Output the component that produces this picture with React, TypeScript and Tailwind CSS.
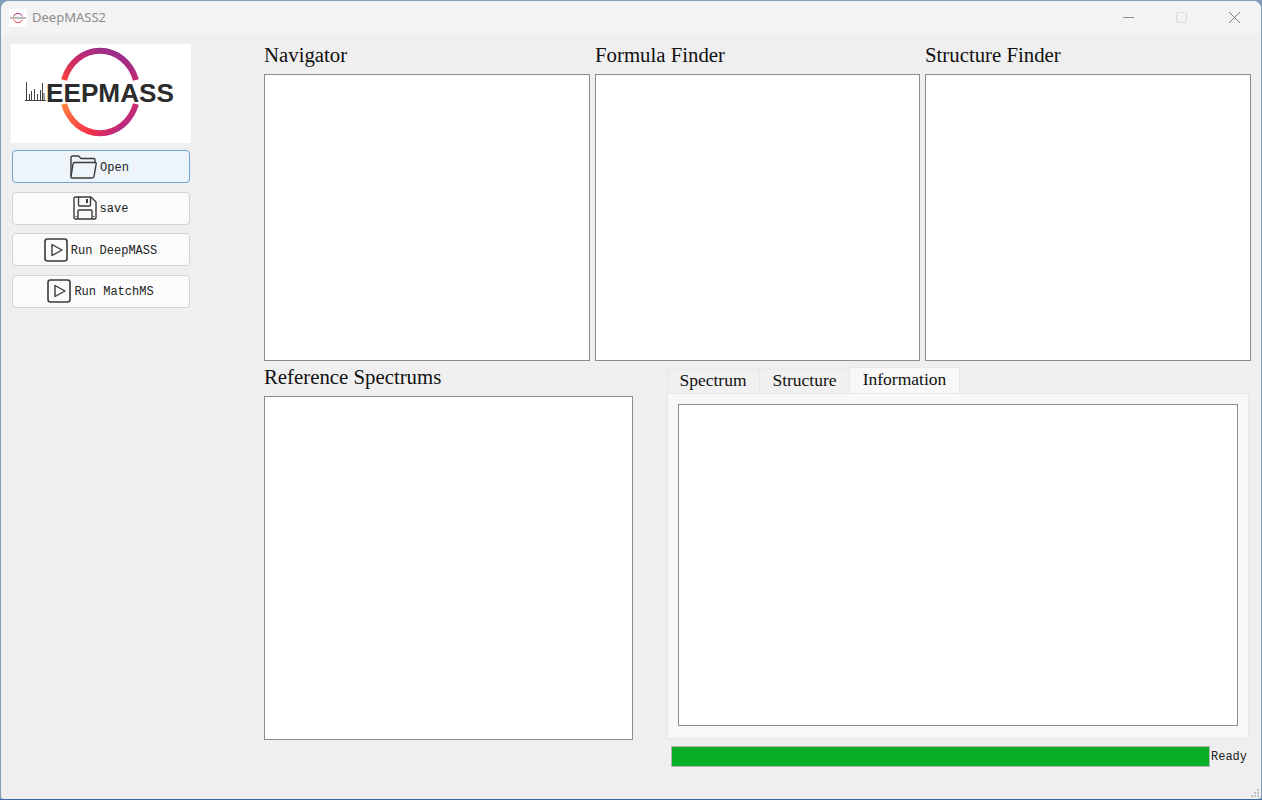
import React from 'react';

const serif = "font-['Liberation_Serif',serif]";

const FolderIcon = () => (
  <svg width="28" height="24" viewBox="0 0 28 24" fill="none" stroke="#3a3a3a" strokeWidth="1.4" strokeLinejoin="round">
    <path d="M2 21V2.500Q2 1 3.500 1H9.500L12 3.500H24.500Q26 3.500 26 5V7.500" />
    <path d="M5.500 7.500H26Q27.500 7.500 27.200 9L25 21.500Q24.800 23 23 23H3Q1.700 23 2 21.500L4 9Q4.200 7.500 5.500 7.500Z" />
  </svg>
);

const SaveIcon = () => (
  <svg width="24" height="24" viewBox="0 0 24 24" fill="none" stroke="#3a3a3a" strokeWidth="1.4" strokeLinejoin="round">
    <path d="M2.500 1H18L23 6V21.500Q23 23 21.500 23H2.500Q1 23 1 21.500V2.500Q1 1 2.500 1Z" />
    <path d="M5.500 1V9Q5.500 10 6.500 10H16.500Q17.500 10 17.500 9V1" />
    <rect x="13" y="3" width="2" height="4" fill="#3a3a3a" stroke="none" />
    <path d="M5 23V15Q5 14 6 14H18Q19 14 19 15V23" />
    <circle cx="3.200" cy="20.500" r="0.700" fill="#3a3a3a" stroke="none" />
    <circle cx="20.800" cy="20.500" r="0.700" fill="#3a3a3a" stroke="none" />
  </svg>
);

const PlayIcon = () => (
  <svg width="24" height="24" viewBox="0 0 24 24" fill="none" stroke="#3a3a3a" strokeLinejoin="round">
    <rect x="1" y="1" width="22" height="22" rx="2.500" strokeWidth="1.600" />
    <path d="M8 6.500L18 12L8 17.500Z" strokeWidth="1.400" />
  </svg>
);

const Logo = () => (
  <svg width="180" height="99" viewBox="0 0 180 99" className="block bg-white">
    <defs>
      <linearGradient id="ringTop" x1="0" y1="1" x2="1" y2="0">
        <stop offset="0" stopColor="#f8403c" />
        <stop offset="0.5" stopColor="#c32a74" />
        <stop offset="1" stopColor="#82309a" />
      </linearGradient>
      <linearGradient id="ringBottom" x1="0" y1="0" x2="1" y2="0.4">
        <stop offset="0" stopColor="#ff8040" />
        <stop offset="0.65" stopColor="#f5304a" />
        <stop offset="1" stopColor="#b42a86" />
      </linearGradient>
    </defs>
    <path d="M53.100 36A37.500 41 0 0 1 124.900 36" fill="none" stroke="url(#ringTop)" strokeWidth="6" />
    <path d="M53.100 60A37.500 41 0 0 0 124.900 60" fill="none" stroke="url(#ringBottom)" strokeWidth="6" />
    <g stroke="#444" strokeWidth="1">
      <path d="M15.500 56V38M18.500 56V50M20.500 56V47M23.500 56V45M26.500 56V50M29.500 56V46M31.500 56V39M33 56V49" />
      <path d="M14 56.500H35" />
    </g>
    <text x="35" y="57.500" fontFamily="Liberation Sans" fontWeight="700" fontSize="26" fill="#2c2c2c" textLength="128" lengthAdjust="spacingAndGlyphs">EEPMASS</text>
  </svg>
);

const TitleLogo = () => (
  <svg width="18" height="18" viewBox="0 0 18 18" className="block bg-white">
    <path d="M4.500 7.500A4.800 4.800 0 0 1 13.500 7.500" fill="none" stroke="#b0307c" strokeWidth="1" />
    <path d="M4.500 10.500A4.800 4.800 0 0 0 13.500 10.500" fill="none" stroke="#f5504a" strokeWidth="1" />
    <path d="M1 9H17" stroke="#777" strokeWidth="1" />
  </svg>
);

const SideButton = ({ icon, label, active }: { icon: React.ReactNode; label: string; active?: boolean }) => (
  <button
    className={`flex h-[33px] w-[178px] items-center justify-center rounded-[4px] border font-['Liberation_Mono',monospace] text-[12px] text-[#222] ${
      active ? 'border-[#6ea4cf] bg-[#edf4fa] pr-[4px]' : 'border-[#d3d3d3] bg-[#fbfbfb] pr-[1px]'
    }`}
  >
    {icon}
    <span className="ml-[3px] pt-[2px]">{label}</span>
  </button>
);

const Panel = ({ title, className }: { title: string; className: string }) => (
  <div className={`flex flex-col ${className}`}>
    <div className={`flex h-[30px] items-center pb-[8px] text-[20.800px] leading-none text-[#111] ${serif}`}>{title}</div>
    <div className="flex-1 border border-[#8a8c93] bg-white" />
  </div>
);

export default function App() {
  return (
    <div className="flex h-[800px] w-[1262px] flex-col overflow-hidden bg-[#7f9db8]">
      <div className="relative ml-[1px] mt-[1px] flex h-[798px] w-[1260px] flex-col rounded-t-[8px] rounded-b-[3px] bg-[#efefef]">
        {/* title bar */}
        <div className="flex h-[33px] shrink-0 items-center rounded-t-[8px] bg-[#f3f3f3] pl-[8px]">
          <TitleLogo />
          <span className="ml-[5px] font-['Noto_Sans',sans-serif] text-[13px] text-[#8c8c8c]">DeepMASS2</span>
          <div className="ml-auto flex items-center">
            <div className="flex w-[44px] justify-center">
              <div className="h-px w-[11px] bg-[#8f8f8f]" />
            </div>
            <div className="flex w-[62px] justify-center">
              <div className="h-[11px] w-[11px] rounded-[2px] border border-[#dcdcdc]" />
            </div>
            <div className="flex w-[44px] justify-center">
              <svg width="13" height="13" viewBox="0 0 13 13" stroke="#7d7d7d" strokeWidth="1">
                <path d="M1 1L12 12M12 1L1 12" />
              </svg>
            </div>
            <div className="w-[5px]" />
          </div>
        </div>

        <div className="flex flex-1 pl-[10px] pr-[10px] pt-[10px]">
          {/* sidebar */}
          <div className="flex w-[180px] shrink-0 flex-col items-start">
            <Logo />
            <div className="ml-px mt-[7px] flex flex-col gap-[8.500px]">
              <SideButton icon={<FolderIcon />} label="Open" active />
              <SideButton icon={<SaveIcon />} label="save" />
              <SideButton icon={<PlayIcon />} label="Run DeepMASS" />
              <SideButton icon={<PlayIcon />} label="Run MatchMS" />
            </div>
          </div>

          {/* main */}
          <div className="ml-[73px] flex flex-1 flex-col">
            <div className="flex h-[317px] gap-[5px]">
              <Panel title="Navigator" className="w-[326px]" />
              <Panel title="Formula Finder" className="w-[325px]" />
              <Panel title="Structure Finder" className="w-[326px]" />
            </div>
            <div className="mt-[5px] flex">
              <Panel title="Reference Spectrums" className="h-[374px] w-[369px]" />
              <div className="ml-[34px] flex w-[582px] flex-col pt-[1px]">
                <div className={`flex h-[26px] items-end pl-px text-[17.500px] leading-none text-[#111] ${serif}`}>
                  <div className="flex h-[24px] w-[92px] items-center justify-center border-r border-t border-l border-[#e8e8e8] bg-[#f0f0f0] pb-[2px] pr-[2px]">Spectrum</div>
                  <div className="flex h-[24px] w-[90px] items-center justify-center border-r border-t border-[#e8e8e8] bg-[#f0f0f0] pb-[2px]">Structure</div>
                  <div className="flex h-[26px] w-[110px] items-center justify-center border-r border-t border-[#e8e8e8] bg-[#f8f8f8] pb-[2px]">Information</div>
                </div>
                <div className="h-[346px] border border-[#e8e8e8] bg-[#f8f8f8] px-[10px] pt-[10px]">
                  <div className="h-[322px] border border-[#8a8c93] bg-white" />
                </div>
                <div className="ml-[4px] mt-[7px] flex items-center">
                  <div className="h-[21px] w-[539px] border border-[#b5b5b5] bg-[#08ae27]" />
                  <span className="ml-[1px] font-['Liberation_Mono',monospace] text-[12px] text-[#222]">Ready</span>
                </div>
              </div>
            </div>
          </div>
        </div>

        {/* resize grip */}
        <svg width="10" height="10" viewBox="0 0 10 10" className="absolute bottom-[1px] right-[1px]" fill="#c4c4c4">
          <rect x="7" y="1" width="2" height="2" />
          <rect x="4" y="4" width="2" height="2" />
          <rect x="7" y="4" width="2" height="2" />
          <rect x="1" y="7" width="2" height="2" />
          <rect x="4" y="7" width="2" height="2" />
          <rect x="7" y="7" width="2" height="2" />
        </svg>
      </div>
      <div className="mt-auto h-px bg-[#3e6ba5]" />
    </div>
  );
}
